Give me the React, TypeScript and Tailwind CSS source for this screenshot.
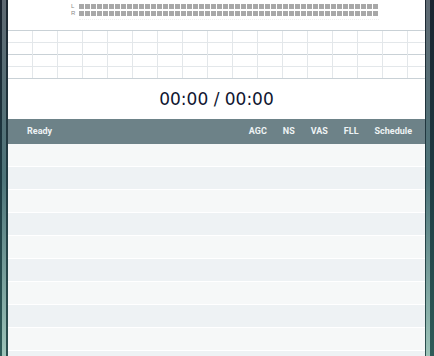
import React from 'react';

const meterBlocks = Array.from({ length: 50 });
const gridCols = Array.from({ length: 17 });
const gridRows = [
  'border-b border-[#e3e7ea]',
  'border-b border-[#c9d1d6]',
  'border-b border-[#e3e7ea]',
  'border-b border-[#c9d1d6]',
];
const listRows = Array.from({ length: 10 });
const flags = ['AGC', 'NS', 'VAS', 'FLL', 'Schedule'];

function Frame({ side }: { side: 'left' | 'right' }) {
  const light = (
    <div className="w-[4px] h-full bg-linear-to-b from-[#5e6972] via-[#4d7479] to-[#9dc4b9]" />
  );
  if (side === 'left') {
    return (
      <div className="flex h-full shrink-0">
        <div className="w-[2px] h-full bg-linear-to-b from-[#1a2430] via-[#1d3a42] to-[#2f5b58]" />
        {light}
        <div className="w-[2px] h-full bg-linear-to-b from-[#1c2731] via-[#213c43] to-[#2b4f4e]" />
      </div>
    );
  }
  return (
    <div className="flex h-full shrink-0">
      <div className="w-[1px] h-full bg-linear-to-b from-[#1c2731] via-[#213c43] to-[#2b4f4e]" />
      {light}
      <div className="w-[4px] h-full bg-linear-to-b from-[#1a2430] via-[#1d3a42] to-[#2f5b58]" />
    </div>
  );
}

export default function App() {
  return (
    <div
      className="w-[434px] h-[356px] flex overflow-hidden bg-white"
      style={{ fontFamily: '"Liberation Sans", Arial, sans-serif' }}
    >
      <Frame side="left" />

      <div className="flex-1 flex flex-col min-w-0 bg-white">
        {/* Level meter */}
        <div className="h-[30px] shrink-0 flex pt-[4px] pl-[63px]">
          <div className="flex flex-col gap-[2px] text-[6px] leading-[5px] text-[#8a8a8a] w-[8px] shrink-0">
            <span>L</span>
            <span>R</span>
          </div>
          <div className="flex flex-col gap-[2px] shrink-0">
            {['L', 'R'].map((ch) => (
              <div key={ch} className="flex gap-[1px]">
                {meterBlocks.map((_, i) => (
                  <div key={i} className="w-[5px] h-[5px] shrink-0 bg-[#a8a8a8]" />
                ))}
              </div>
            ))}
            <div className="mt-[1px] w-[300px] border-t border-dotted border-[#eeeeee]" />
          </div>
        </div>

        {/* Grid */}
        <div className="h-[49px] shrink-0 border-t border-[#c9d1d6] relative overflow-hidden">
          <div className="flex flex-col">
            {gridRows.map((cls, i) => (
              <div key={i} className={`h-[12px] ${cls}`} />
            ))}
          </div>
          <div className="absolute inset-x-0 top-0 bottom-[1px] flex">
            {gridCols.map((_, i) => (
              <div key={i} className="w-[25px] shrink-0 border-r border-[#e3e7ea]" />
            ))}
          </div>
        </div>

        {/* Time */}
        <div className="h-[40px] shrink-0 flex items-center justify-center">
          <span
            className="text-[17px] text-[#101631] leading-none"
            style={{ fontFamily: '"DejaVu Sans", Verdana, sans-serif' }}
          >
            00:00 / 00:00
          </span>
        </div>

        {/* Status bar */}
        <div
          className="h-[25px] shrink-0 bg-[#6d8288] flex items-center pl-[19px] pr-[13px] text-[9px] font-bold text-[#eef3f4]"
          style={{ fontFamily: 'Roboto, "Liberation Sans", sans-serif' }}
        >
          <span>Ready</span>
          <div className="ml-auto flex gap-[16px]">
            {flags.map((f) => (
              <span key={f}>{f}</span>
            ))}
          </div>
        </div>

        {/* List rows */}
        <div className="flex-1 min-h-0 overflow-hidden flex flex-col">
          {listRows.map((_, i) => (
            <div
              key={i}
              className={`h-[23px] shrink-0 border-b border-white ${
                i % 2 === 0 ? 'bg-[#f6f8f8]' : 'bg-[#eef2f4]'
              }`}
            />
          ))}
        </div>
      </div>

      <Frame side="right" />
    </div>
  );
}
